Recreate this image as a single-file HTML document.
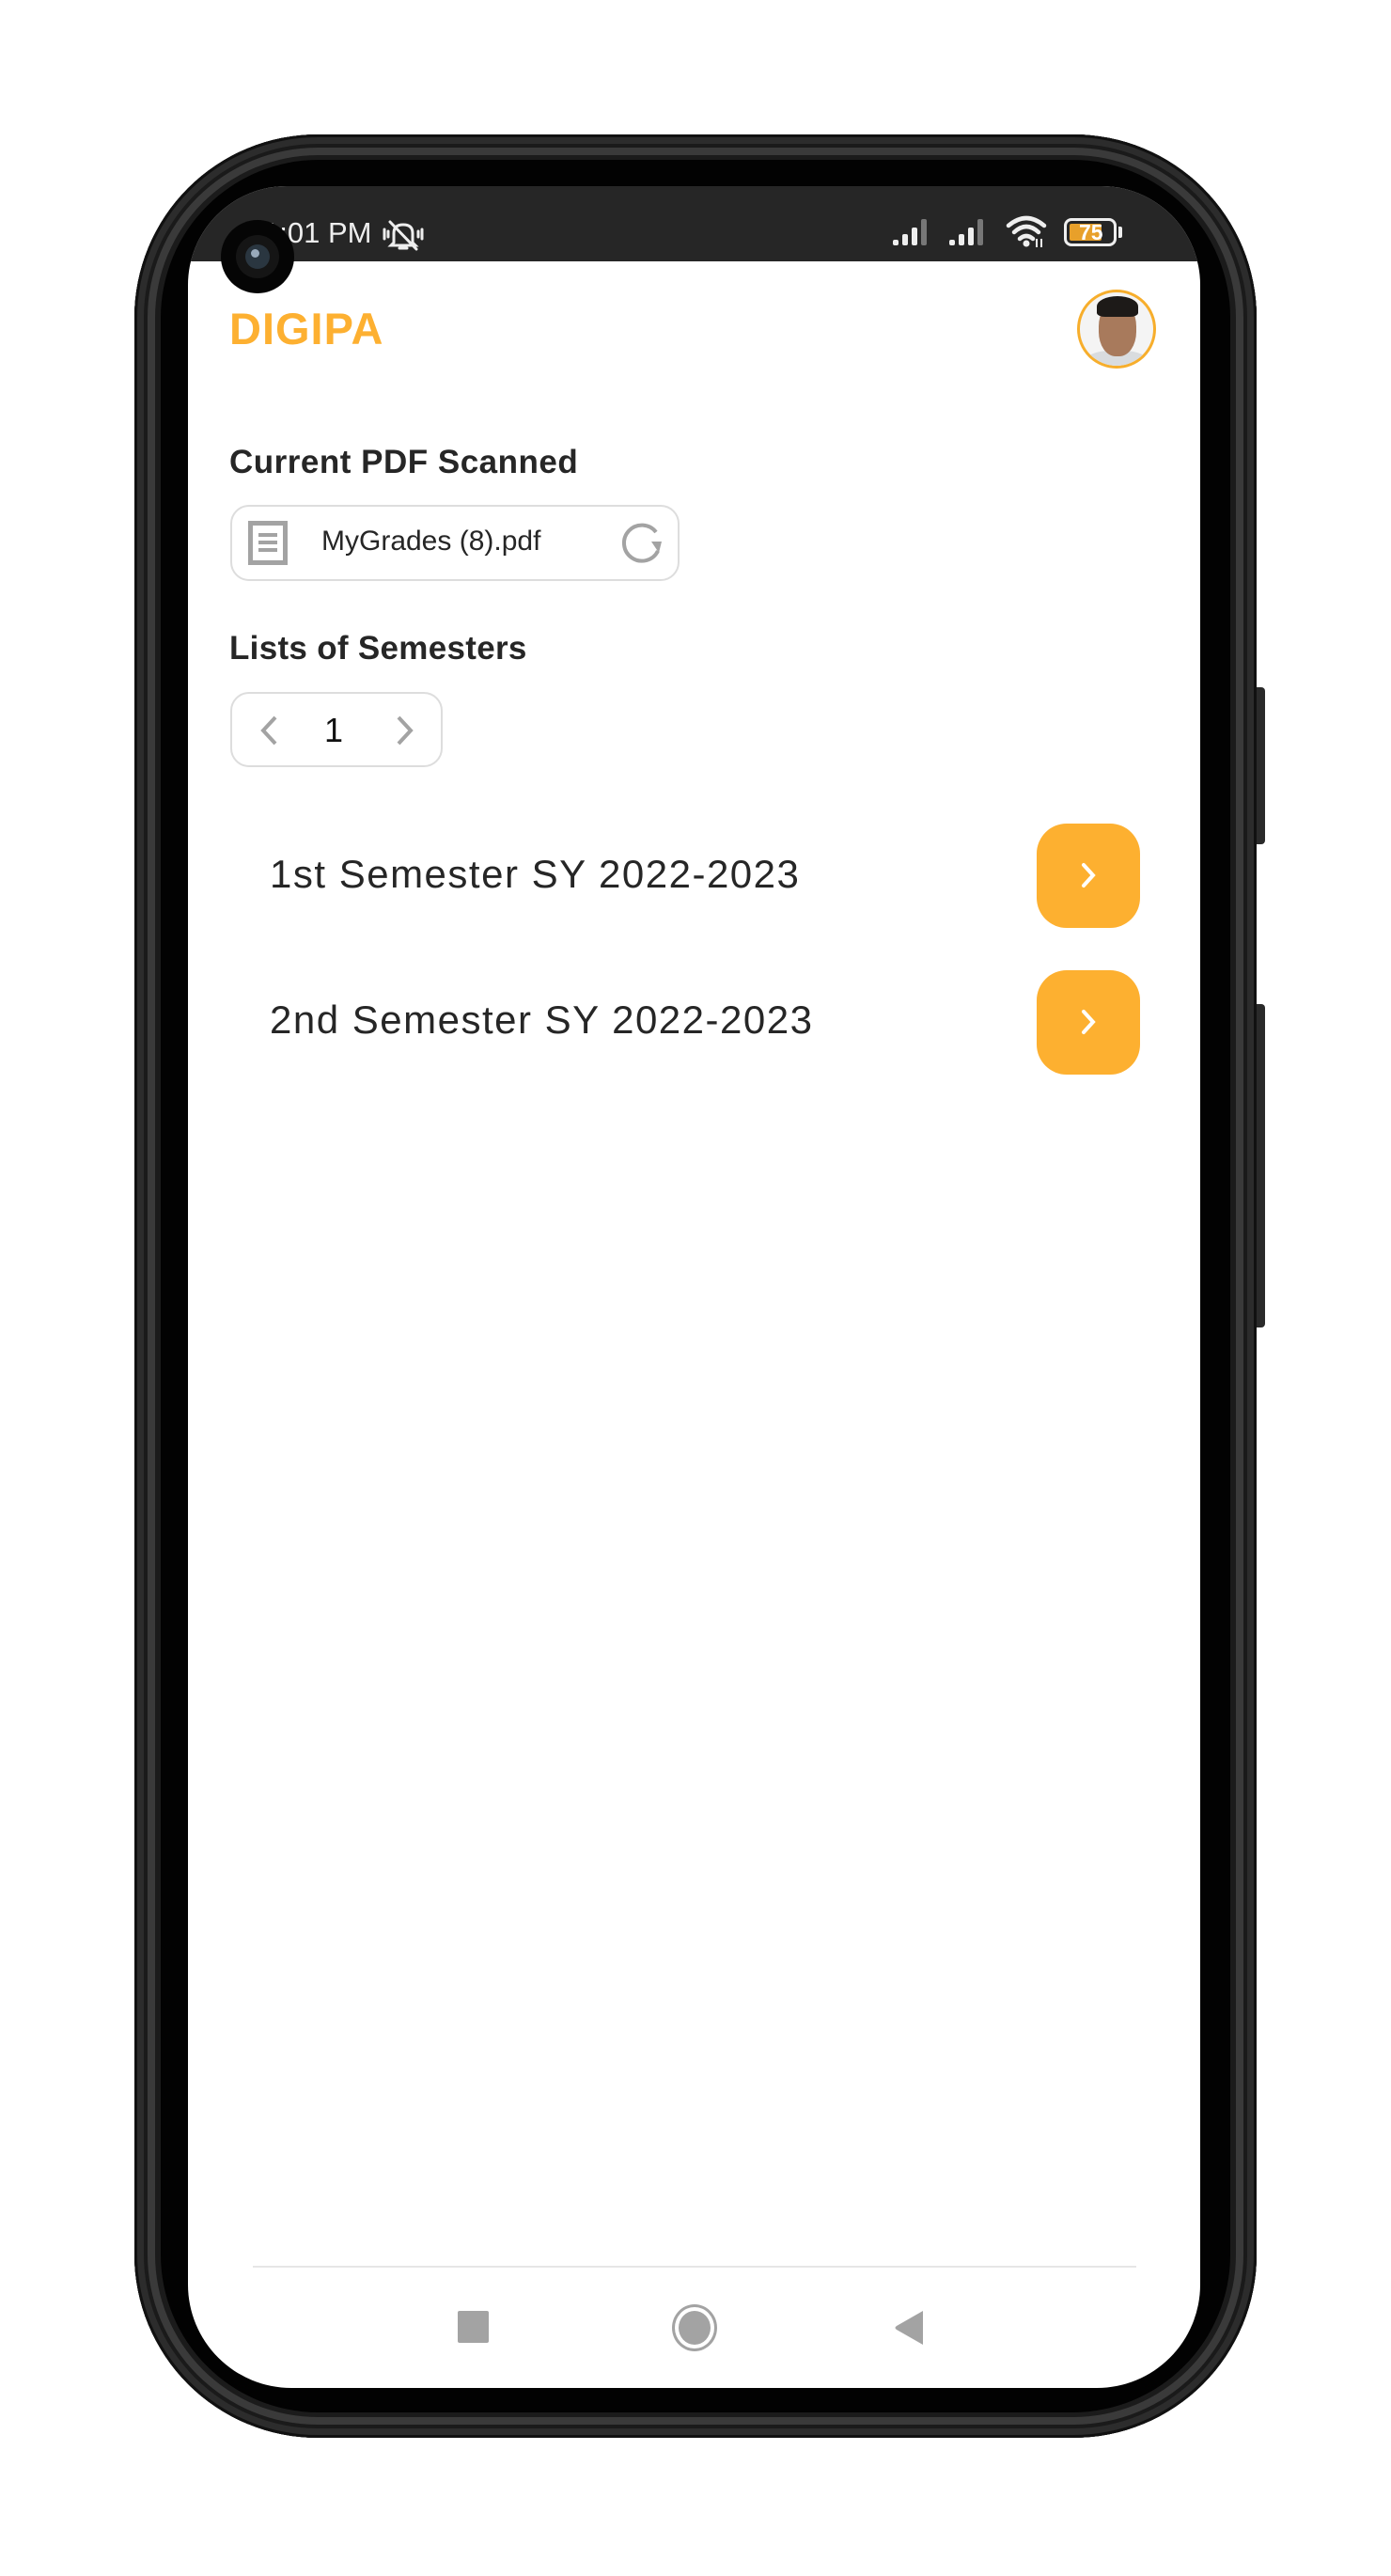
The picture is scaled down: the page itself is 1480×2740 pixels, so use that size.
<!DOCTYPE html>
<html><head><meta charset="utf-8">
<style>
*{margin:0;padding:0;box-sizing:border-box}
html,body{width:1480px;height:2740px;background:#fff;overflow:hidden;font-family:"Liberation Sans",sans-serif}
.abs{position:absolute}
#ph{left:143px;top:143px;width:1194px;height:2450px;border-radius:195px;background:#1b1b1b;box-shadow:inset 0 0 0 3px #111,inset 0 0 0 10px #2c2c2c,inset 0 0 0 14px #1a1a1a,inset 0 0 0 22px #3a3a3a}
#blk{left:171px;top:170px;width:1138px;height:2396px;border-radius:168px;background:#020202}
#scr{left:200px;top:198px;width:1077px;height:2342px;border-radius:105px 105px 110px 110px;background:#fff;overflow:hidden}
#sb{left:0;top:0;width:1077px;height:80px;background:#262626}
.btn{width:9px;background:#2a2a2a;border-radius:0 4px 4px 0;left:1337px}
.t{color:#262626;white-space:nowrap}
</style></head><body>
<div class="abs btn" style="top:731px;height:167px"></div>
<div class="abs btn" style="top:1068px;height:344px"></div>
<div id="ph" class="abs"></div>
<div id="blk" class="abs"></div>
<div id="scr" class="abs">
  <div id="sb" class="abs"></div>
  <div class="abs" style="left:80px;top:32px;color:#eee;font-size:31px;white-space:nowrap">1:01 PM</div>
  <svg class="abs" style="left:205px;top:34px" width="48" height="36" viewBox="0 0 48 36">
    <g stroke="#eee" stroke-width="3" fill="none" stroke-linecap="round">
      <path d="M14 26 L14 16 Q14 7 24 7 Q34 7 34 16 L34 26 L37 29 L11 29 Z"/>
      <path d="M20 32 L28 32"/><path d="M10 4 L38 33"/>
      <path d="M4 12 L4 22 M8 14 L8 20 M44 12 L44 22 M40 14 L40 20"/>
    </g>
  </svg>
  <svg class="abs" style="left:750px;top:33px" width="110" height="32" viewBox="0 0 110 32">
    <g fill="#eee"><rect x="0" y="24" width="6" height="6" rx="2"/><rect x="10" y="18" width="6" height="12" rx="2"/><rect x="20" y="11" width="6" height="19" rx="2"/></g>
    <rect x="30" y="2" width="6" height="28" rx="2" fill="#777"/>
    <g fill="#eee"><rect x="60" y="24" width="6" height="6" rx="2"/><rect x="70" y="18" width="6" height="12" rx="2"/><rect x="80" y="11" width="6" height="19" rx="2"/></g>
    <rect x="90" y="2" width="6" height="28" rx="2" fill="#777"/>
  </svg>
  <svg class="abs" style="left:870px;top:30px" width="48" height="36" viewBox="0 0 48 36">
    <g stroke="#eee" stroke-width="4.5" fill="none" stroke-linecap="round">
      <path d="M3 12 Q22 -4 41 12"/><path d="M9 19 Q22 7 35 19"/><path d="M15 26 Q22 20 29 26"/>
    </g>
    <circle cx="22" cy="31" r="3.5" fill="#eee"/>
    <path d="M33 26 L33 35 M38 26 L38 35" stroke="#eee" stroke-width="2"/>
  </svg>
  <div class="abs" style="left:932px;top:34px;width:56px;height:30px;border:3px solid #eee;border-radius:8px;padding:3px">
    <div style="width:34px;height:18px;background:#e8a02a;border-radius:2px"></div>
  </div>
  <div class="abs" style="left:948px;top:34px;color:#fff;font-size:23px;font-weight:bold;line-height:30px">75</div>
  <div class="abs" style="left:990px;top:43px;width:4px;height:12px;background:#eee;border-radius:0 2px 2px 0"></div>
  <div class="abs" style="left:35px;top:36px;width:78px;height:78px;border-radius:50%;background:#050505"></div>
  <div class="abs" style="left:51px;top:52px;width:46px;height:46px;border-radius:50%;background:#151515"></div>
  <div class="abs" style="left:61px;top:62px;width:26px;height:26px;border-radius:50%;background:#2a3640"></div>
  <div class="abs" style="left:67px;top:67px;width:9px;height:9px;border-radius:50%;background:#9ab"></div>

  <div class="abs" style="left:44px;top:124px;color:#FDB031;font-size:47px;font-weight:bold;letter-spacing:1px">DIGIPA</div>
  <div class="abs" style="left:946px;top:110px;width:84px;height:84px;border-radius:50%;border:3px solid #F7AE2C;background:#f4f4f4;overflow:hidden">
    <div class="abs" style="left:5px;top:62px;width:68px;height:30px;border-radius:40% 40% 0 0;background:#d9dcdf"></div>
    <div class="abs" style="left:20px;top:10px;width:40px;height:58px;border-radius:45%;background:#a87a5c"></div>
    <div class="abs" style="left:18px;top:4px;width:44px;height:22px;border-radius:50% 50% 20% 20%;background:#1d1a18"></div>
  </div>

  <div class="abs t" style="left:44px;top:274px;font-size:35px;font-weight:bold;letter-spacing:0.5px">Current PDF Scanned</div>
  <div class="abs" style="left:45px;top:339px;width:478px;height:81px;border:2px solid #ddd;border-radius:20px"></div>
  <svg class="abs" style="left:64px;top:356px" width="44" height="48" viewBox="0 0 44 48">
    <rect x="2.5" y="2.5" width="37" height="42" fill="none" stroke="#a3a3a3" stroke-width="5"/>
    <g fill="#a3a3a3"><rect x="11" y="13" width="20" height="4"/><rect x="11" y="21" width="20" height="4"/><rect x="11" y="29" width="20" height="4"/></g>
  </svg>
  <div class="abs t" style="left:142px;top:361px;font-size:30px">MyGrades (8).pdf</div>
  <svg class="abs" style="left:458px;top:354px" width="50" height="50" viewBox="0 0 50 50">
    <path d="M40 14 A19 19 0 1 0 42 34" fill="none" stroke="#a3a3a3" stroke-width="4"/>
    <path d="M35 24 L46 24 L43 36 Z" fill="#a3a3a3"/>
  </svg>

  <div class="abs t" style="left:44px;top:472px;font-size:35px;font-weight:bold;letter-spacing:0.3px">Lists of Semesters</div>
  <div class="abs" style="left:45px;top:538px;width:226px;height:80px;border:2px solid #ddd;border-radius:20px"></div>
  <svg class="abs" style="left:75px;top:562px" width="24" height="34" viewBox="0 0 24 34"><path d="M18 3 L5 17 L18 31" fill="none" stroke="#a3a3a3" stroke-width="4"/></svg>
  <div class="abs" style="left:145px;top:558px;font-size:36px;color:#111">1</div>
  <svg class="abs" style="left:218px;top:562px" width="24" height="34" viewBox="0 0 24 34"><path d="M6 3 L19 17 L6 31" fill="none" stroke="#a3a3a3" stroke-width="4"/></svg>

  <div class="abs t" style="left:87px;top:708px;font-size:42px;letter-spacing:1.5px">1st Semester SY 2022-2023</div>
  <div class="abs" style="left:903px;top:678px;width:110px;height:111px;border-radius:32px;background:#FDB030"></div>
  <svg class="abs" style="left:948px;top:718px" width="20" height="30" viewBox="0 0 20 30"><path d="M5 4 L15 15 L5 26" fill="none" stroke="#fff" stroke-width="4" stroke-linecap="round"/></svg>

  <div class="abs t" style="left:87px;top:863px;font-size:42px;letter-spacing:1.5px">2nd Semester SY 2022-2023</div>
  <div class="abs" style="left:903px;top:834px;width:110px;height:111px;border-radius:32px;background:#FDB030"></div>
  <svg class="abs" style="left:948px;top:874px" width="20" height="30" viewBox="0 0 20 30"><path d="M5 4 L15 15 L5 26" fill="none" stroke="#fff" stroke-width="4" stroke-linecap="round"/></svg>

  <div class="abs" style="left:69px;top:2212px;width:940px;height:2px;background:#e6e6e6"></div>
  <div class="abs" style="left:287px;top:2260px;width:33px;height:34px;border-radius:2px;background:#a3a3a3"></div>
  <div class="abs" style="left:515px;top:2253px;width:48px;height:50px;border-radius:50%;border:3px solid #a3a3a3;padding:4px"><div style="width:34px;height:36px;border-radius:50%;background:#a3a3a3"></div></div>
  <svg class="abs" style="left:750px;top:2258px" width="34" height="40" viewBox="0 0 34 40"><path d="M32 2 L32 38 L4 22 Q1 20 4 18 Z" fill="#a3a3a3"/></svg>
</div>
</body></html>
